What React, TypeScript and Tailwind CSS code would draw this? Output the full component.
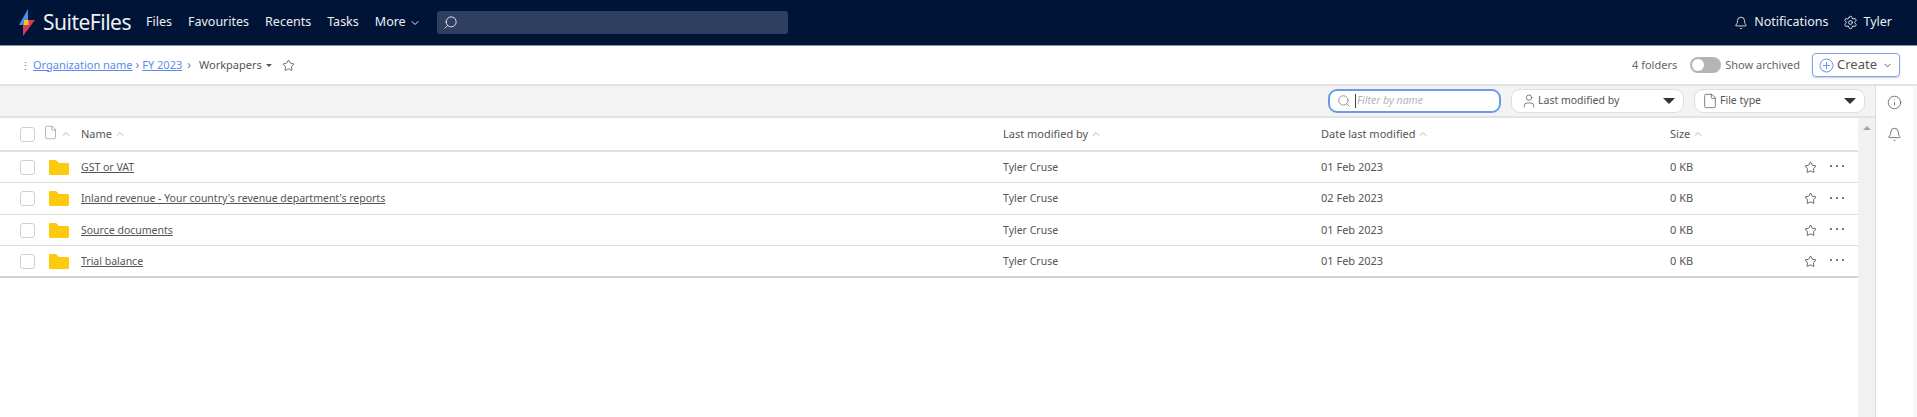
import React from 'react';
import { Bell, ChevronDown, ChevronUp, File, Info, Search, Settings, Star, User } from 'lucide-react';

const rows = [
  { name: 'GST or VAT', date: '01 Feb 2023', h: 'h-[31px]' },
  { name: "Inland revenue - Your country's revenue department's reports", date: '02 Feb 2023', h: 'h-[32px]' },
  { name: 'Source documents', date: '01 Feb 2023', h: 'h-[31px]' },
  { name: 'Trial balance', date: '01 Feb 2023', h: 'h-[32px]' },
];

const Logo = () => (
  <svg width="16" height="27" viewBox="0 0 16 27" className="block">
    <path d="M9 0 L0 16 L9 16 Z" fill="#4a90e2" />
    <path d="M4 16 L9 11 L16 11 L4 27 Z" fill="#d6395f" />
    <rect x="5" y="11" width="4.5" height="5" fill="#fbc50d" />
  </svg>
);

const FolderIcon = () => (
  <svg width="20" height="15" viewBox="0 0 20 15">
    <path d="M0 1 Q0 0 1 0 L7 0 L10 3 L19 3 Q20 3 20 4 L20 14 Q20 15 19 15 L1 15 Q0 15 0 14 Z" fill="#fdca0e" />
  </svg>
);

const Checkbox = () => <div className="w-[15px] h-[15px] rounded-[3px] border border-[#cfcfd4] bg-white" />;

const SortUp = () => <ChevronUp size={12} className="text-[#a0a0a0] ml-[2px]" strokeWidth={1.5} />;

const gridCols = 'grid grid-cols-[81px_922px_318px_349px_1fr] items-center';

export default function App() {
  return (
    <div className="w-[1917px] h-[417px] bg-white overflow-hidden flex flex-col font-['Noto_Sans',sans-serif] text-[11px] text-[#555]">
      <header className="h-[46px] shrink-0 bg-[#001437] border-b border-[#8a94a6] flex items-center text-white">
        <div className="ml-[19px]">
          <Logo />
        </div>
        <span className="ml-[8px] text-[21px] leading-none tracking-[-0.5px] text-[#eef0f4]">SuiteFiles</span>
        <nav className="flex items-center gap-[16px] ml-[15px] text-[12.5px] text-[#eceef2]">
          <span>Files</span>
          <span>Favourites</span>
          <span>Recents</span>
          <span>Tasks</span>
          <span className="flex items-center">
            More
            <ChevronDown size={12} className="ml-[3px]" />
          </span>
        </nav>
        <div className="ml-[16px] w-[351px] h-[23px] rounded-[3px] bg-[#2f3f5f] flex items-center pl-[6px]">
          <Search size={15} className="-scale-x-100 text-[#e6e8ee]" strokeWidth={1.5} />
        </div>
        <div className="ml-auto flex items-center mr-[25px] text-[12.5px] text-[#eceef2]">
          <Bell size={14} strokeWidth={1.5} />
          <span className="ml-[6px]">Notifications</span>
          <Settings size={15} strokeWidth={1.5} className="ml-[15px]" />
          <span className="ml-[5px]">Tyler</span>
        </div>
      </header>

      <div className="h-[40px] shrink-0 border-b-2 border-[#e3e3e3] flex items-center pl-[20px] pr-[17px]">
        <span className="w-[13px] text-[#777] text-[11px] leading-none">⋮</span>
        <a className="text-[#5a8af0] underline text-[11px]">Organization name</a>
        <span className="text-[#5f7fc0] mx-[3px] text-[12px]">›</span>
        <a className="text-[#5a8af0] underline text-[11px]">FY 2023</a>
        <span className="text-[#5f7fc0] mx-[5px] text-[12px]">›</span>
        <span className="text-[#555] text-[11px] ml-[3px]">Workpapers</span>
        <span className="ml-[4px] w-0 h-0 border-x-[3px] border-x-transparent border-t-[3px] border-t-[#555]" />
        <Star size={13} className="ml-[10px] text-[#555]" strokeWidth={1.5} />
        <div className="ml-auto flex items-center">
          <span className="text-[11px] text-[#666]">4 folders</span>
          <div className="ml-[13px] w-[31px] h-[16px] rounded-full bg-[#b5b3b3] flex items-center pl-[2px]">
            <div className="w-[12px] h-[12px] rounded-full bg-white" />
          </div>
          <span className="ml-[4px] text-[11px] text-[#666]">Show archived</span>
          <button className="ml-[12px] w-[88px] h-[24px] rounded-[4px] border border-[#7ea6ee] shadow-[0_1px_2px_rgba(0,0,0,0.2)] flex items-center justify-center text-[13px] text-[#555]">
            <svg width="15" height="15" viewBox="0 0 15 15" className="mr-[3px]" fill="none" stroke="#6d97ea" strokeWidth="1">
              <circle cx="7.5" cy="7.5" r="6.5" />
              <path d="M7.5 4v7M4 7.5h7" />
            </svg>
            Create
            <ChevronDown size={11} className="ml-[5px]" />
          </button>
        </div>
      </div>

      <div className="flex-1 flex min-h-0">
        <div className="flex-1 flex flex-col min-w-0">
          <div className="h-[32px] shrink-0 bg-[#f3f3f3] border-b-2 border-[#e3e3e3] flex items-center justify-end gap-[10px] pr-[10px]">
            <div className="w-[173px] h-[24px] rounded-[9px] border-2 border-[#6d9be8] bg-white flex items-center pl-[7px]">
              <Search size={14} className="text-[#8a8a8a]" strokeWidth={1.5} />
              <span className="ml-[4px] w-px h-[14px] bg-[#444]" />
              <span className="ml-px italic text-[10.5px] text-[#b5b5b5]">Filter by name</span>
            </div>
            <div className="w-[173px] h-[24px] rounded-[9px] border border-[#dedede] bg-white flex items-center pl-[9px] pr-[8px]">
              <User size={16} strokeWidth={1} className="text-[#444]" />
              <span className="ml-px text-[10.5px]">Last modified by</span>
              <span className="ml-auto w-0 h-0 border-x-[6px] border-x-transparent border-t-[6px] border-t-[#333]" />
            </div>
            <div className="w-[171px] h-[24px] rounded-[9px] border border-[#dedede] bg-white flex items-center pl-[7px] pr-[8px]">
              <File size={16} strokeWidth={1} className="text-[#444]" />
              <span className="ml-[2px] text-[10.5px]">File type</span>
              <span className="ml-auto w-0 h-0 border-x-[6px] border-x-transparent border-t-[6px] border-t-[#333]" />
            </div>
          </div>

          <div className="flex-1 flex min-h-0">
            <div className="flex-1 min-w-0">
              <div className={`${gridCols} h-[34px] border-b-2 border-[#e0e0e0] text-[11px] text-[#555]`}>
                <div className="flex items-center pl-[20px]">
                  <Checkbox />
                  <File size={15} strokeWidth={1} className="ml-[8px] -mt-[4px] text-[#888]" />
                  <SortUp />
                </div>
                <span className="flex items-center">Name<SortUp /></span>
                <span className="flex items-center">Last modified by<SortUp /></span>
                <span className="flex items-center">Date last modified<SortUp /></span>
                <span className="flex items-center">Size<SortUp /></span>
              </div>
              {rows.map((row, i) => (
                <div key={row.name} className={`${gridCols} ${row.h} ${i === rows.length - 1 ? 'border-b-2 border-[#d2d2d2]' : 'border-b border-[#dedede]'}`}>
                  <div className="flex items-center pl-[20px]">
                    <Checkbox />
                    <span className="ml-[14px] flex">
                      <FolderIcon />
                    </span>
                  </div>
                  <a className="underline truncate text-[#555] text-[10.5px] pr-4 pt-px">{row.name}</a>
                  <span className="text-[10.5px] pt-px">Tyler Cruse</span>
                  <span>{row.date}</span>
                  <div className="flex items-center">
                    <span>0 KB</span>
                    <Star size={13} strokeWidth={1.5} className="ml-[111px] text-[#444]" />
                    <span className="ml-[13px] -mt-[2px] flex gap-[4px]">
                      <i className="w-[2px] h-[2px] bg-[#777]" />
                      <i className="w-[2px] h-[2px] bg-[#777]" />
                      <i className="w-[2px] h-[2px] bg-[#777]" />
                    </span>
                  </div>
                </div>
              ))}
            </div>
            <div className="w-[17px] shrink-0 bg-[#f1f1f1] flex justify-center pt-[8px]">
              <span className="w-0 h-0 border-x-[4px] border-x-transparent border-b-[4px] border-b-[#a3a3a3]" />
            </div>
          </div>
        </div>

        <aside className="w-[42px] shrink-0 border-l border-[#dcdcdc] flex">
          <div className="w-[37px] flex flex-col items-center pt-[9px] gap-[17px] text-[#555]">
            <Info size={15} strokeWidth={1.25} />
            <Bell size={15} strokeWidth={1.25} />
          </div>
          <div className="flex-1 bg-[#f7f7f7]" />
        </aside>
      </div>
    </div>
  );
}
